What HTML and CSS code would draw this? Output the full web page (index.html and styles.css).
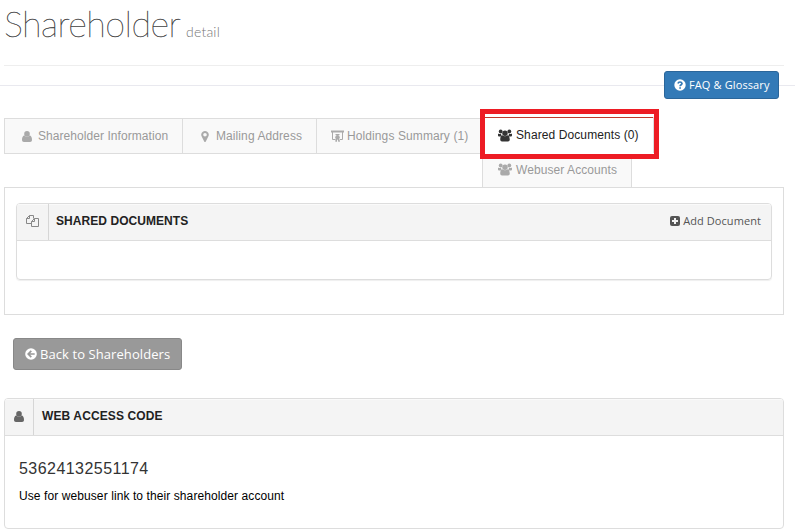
FILE: index.html
```html
<!DOCTYPE html>
<html lang="en">
<head>
<meta charset="utf-8">
<title>Shareholder detail</title>
<link rel="stylesheet" href="styles.css">
</head>
<body>
<svg class="defs" aria-hidden="true">
  <symbol id="user" viewBox="0 0 10 11"><circle cx="5" cy="2.9" r="2.8"/><path d="M2.300 4.300C.7 4.900 0 6.500 0 9c0 1.200.8 2 1.900 2h6.200C9.200 11 10 10.200 10 9c0-2.500-.7-4.100-2.300-4.700C7 5.500 6.100 6 5 6S3 5.500 2.300 4.300z"/></symbol>
  <symbol id="pin" viewBox="0 0 8 11"><path fill-rule="evenodd" d="M4 0a3.700 3.700 0 0 0-3.400 5.300L3.200 10.500q.8 1 1.600 0L7.400 5.300A3.700 3.700 0 0 0 4 0zM4 2a1.800 1.800 0 1 1 0 3.600A1.800 1.800 0 0 1 4 2z"/></symbol>
  <symbol id="board" viewBox="0 0 13 13"><path d="M0 .5h13v2H0z"/><path fill="none" stroke="currentColor" d="M1.500 2v7.500h3M11.500 2v7.500H9M4.500 4.500h4"/><circle cx="6.500" cy="7.300" r="2.200"/><path d="M4.800 8.500h1.700L5.700 12l-1.500-.5zM6.500 8.500h1.700l.8 3-1.500.5z"/></symbol>
  <symbol id="group" viewBox="0 0 14 13"><circle cx="2.700" cy="2.500" r="1.900"/><circle cx="11.300" cy="2.500" r="1.900"/><path d="M0 4.500q1 .8 3 .5.200 1.800 1.300 2.500H1Q0 7.500 0 6.500zM14 4.500q-1 .8-3 .5-.2 1.800-1.300 2.500H13q1 0 1-1z"/><circle cx="7" cy="4.200" r="2.700"/><path d="M4.600 6.200Q7 8.400 9.400 6.200q2.400.6 2.400 4.200 0 2.100-1.800 2.100H4q-1.800 0-1.800-2.100 0-3.600 2.400-4.200z"/></symbol>
  <symbol id="question" viewBox="0 0 12 12"><circle cx="6" cy="6" r="5.700"/><path fill="none" stroke="#337ab7" stroke-width="1.700" d="M4 4.500Q4.300 3 6 3t2 1.500C8 5.700 6.100 5.700 6.100 7.200M6.100 8.300v1.500"/></symbol>
  <symbol id="copy" viewBox="0 0 13 12"><path fill="none" stroke="currentColor" d="M5.500 8.500h-5v-5l3-3h4v3M3.500.5v3h-3M5.500 11.500h7v-8h-4l-3 3zM8.500 3.500v3h-3"/></symbol>
  <symbol id="plus" viewBox="0 0 10 10"><rect width="10" height="10" rx="2"/><path stroke="#f4f4f4" stroke-width="2" d="M5 2v6M2 5h6"/></symbol>
  <symbol id="back" viewBox="0 0 12 12"><circle cx="6" cy="6" r="5.800"/><path fill="none" stroke="#999" stroke-width="1.700" d="M6.300 2.800L3.200 6l3.100 3.200M3.500 6H9.700"/></symbol>
</svg>

<header class="page-header">
  <h1>Shareholder</h1><small>detail</small>
</header>
<div class="toolbar">
  <a class="btn btn-faq"><svg class="i12"><use href="#question"/></svg><span>FAQ &amp; Glossary</span></a>
</div>

<main>
  <nav class="tabs">
    <a class="tab"><svg class="i-user"><use href="#user"/></svg><span class="t-info">Shareholder Information</span></a>
    <a class="tab tab-mail"><svg class="i-pin"><use href="#pin"/></svg><span class="t-mail">Mailing Address</span></a>
    <a class="tab tab-hold"><svg class="i-board"><use href="#board"/></svg><span class="t-hold">Holdings Summary (1)</span></a>
    <a class="tab active"><svg class="i-group"><use href="#group"/></svg><span class="t-docs">Shared Documents (0)</span></a>
    <a class="tab tab-web"><svg class="i-group"><use href="#group"/></svg><span class="t-web">Webuser Accounts</span></a>
  </nav>
  <section class="tab-content">
    <div class="panel panel-docs">
      <div class="panel-head">
        <span class="cell"><svg class="i-copy"><use href="#copy"/></svg></span>
        <h2 class="t-shared">SHARED DOCUMENTS</h2>
        <a class="add"><svg class="i-plus"><use href="#plus"/></svg><span>Add Document</span></a>
      </div>
    </div>
  </section>
  <a class="btn btn-back"><svg class="i12"><use href="#back"/></svg><span>Back to Shareholders</span></a>
  <section class="panel panel-code">
    <div class="panel-head">
      <span class="cell"><svg class="i-user"><use href="#user"/></svg></span>
      <h2 class="t-code">WEB ACCESS CODE</h2>
    </div>
    <div class="panel-body">
      <div class="code">53624132551174</div>
      <p>Use for webuser link to their shareholder account</p>
    </div>
  </section>
</main>
</body>
</html>
```

FILE: styles.css
```css
* { box-sizing: border-box; }
body { margin: 0; background: #fff; font: 12px/18px "Liberation Sans", Arial, sans-serif; color: #000; overflow: hidden; }
svg { fill: currentColor; flex: none; display: block; }
.defs { position: absolute; width: 0; height: 0; }
span, h1, h2, small, p { white-space: nowrap; }

.page-header { height: 66px; margin: 0 11px 0 4px; border-bottom: 1px solid #eee; display: flex; align-items: baseline; }
h1 { margin: 2px 0 0; font: 100 36px/43px Lato, sans-serif; color: #333; letter-spacing: -.55px; width: 182px; -webkit-text-stroke: .35px #444; }
small { font: 300 14px/20px Lato, sans-serif; color: #777; letter-spacing: .2px; }

.toolbar { height: 52px; padding: 5px 16px 0 0; display: flex; justify-content: flex-end; background: linear-gradient(#e9e9ef, #e9e9ef) 0 19px / 100% 1px no-repeat; }
.btn { display: flex; align-items: center; color: #fff; border-radius: 3px; font-family: "Open Sans", sans-serif; }
.btn-faq { width: 115px; height: 28px; padding-left: 9px; gap: 3px; background: #337ab7; border: 1px solid #2b669a; font-size: 11px; letter-spacing: .12px; }
.i12 { width: 12px; height: 12px; }

main { margin: 0 11px 0 4px; }
.tabs { display: grid; grid-template-columns: 178px 134px 164px 179px; grid-template-rows: 36px 33px; position: relative; }
.tab { display: flex; align-items: center; background: #f9f9f9; border: 1px solid #ddd; border-right: 0; color: #999; padding-left: 17px; }
.tab-mail { padding-left: 18px; }
.tab-hold { padding-left: 14px; }
.tab svg { color: #aaa; }
.i-user { width: 10px; height: 11px; }
.tab .i-user { margin-right: 6px; }
.i-pin { width: 8px; height: 11px; margin-right: 7px; }
.i-board { width: 13px; height: 13px; margin-right: 3px; }
.i-group { width: 14px; height: 13px; margin-right: 4px; }
.active { position: relative; z-index: 1; height: 50px; margin-top: -9px; border: 5px solid #ed1c24; background: #fff linear-gradient(#c0392b, #c0392b) 0 3px / 168px 1px no-repeat; color: #222; padding: 2px 0 0 13px; }
.active::after { content: ""; width: 1px; height: 36px; background: #ddd; margin-left: 14px; }
.tab.active svg { color: #333; }
.tab-web { grid-column: 4; width: 150px; margin-left: 2px; border-right: 1px solid #ddd; border-width: 0 1px; padding: 0 0 2px 15px; }
.t-info { letter-spacing: .06px; }
.t-mail { letter-spacing: .09px; }
.t-hold { letter-spacing: .1px; }
.t-docs { letter-spacing: .1px; }
.t-web { letter-spacing: .08px; }

.tab-content { height: 128px; width: 780px; border: 1px solid #ddd; padding: 15px 11px; }
.panel { border: 1px solid #ddd; border-radius: 4px; overflow: hidden; }
.panel-docs { height: 77px; box-shadow: 0 1px 1px #0001; }
.panel-head { height: 37px; display: flex; align-items: center; background: #f4f4f4; border-bottom: 1px solid #ddd; box-shadow: inset 0 1px #fafafa; }
.cell { display: flex; align-items: center; justify-content: center; height: 100%; width: 32px; border-right: 1px solid #d6d6d6; color: #888; padding-bottom: 2px; }
.panel-code .cell { width: 29px; color: #666; }
.i-copy { width: 13px; height: 12px; }
h2 { margin: 0 0 2px; padding-left: 7px; font: bold 12px/18px "Liberation Sans", Arial, sans-serif; color: #222; letter-spacing: .06px; }
.panel-code h2 { padding-left: 8px; letter-spacing: .12px; }
.add { display: flex; align-items: center; gap: 3px; margin: 0 10px 2px auto; color: #555; font: 11px/18px "Open Sans", sans-serif; letter-spacing: .08px; }
.i-plus { width: 10px; height: 10px; }

.btn-back { width: 169px; height: 32px; margin: 23px 0 28px 9px; padding-left: 11px; gap: 3px; background: #999; border: 1px solid #888; font-size: 13px; letter-spacing: .08px; }
.panel-code { width: 780px; height: 131px; }
.panel-body { padding: 23px 14px; }
.code { font-size: 16px; line-height: 20px; color: #333; letter-spacing: .45px; }
p { margin: 8px 0 0; line-height: 18px; letter-spacing: .09px; }
```
